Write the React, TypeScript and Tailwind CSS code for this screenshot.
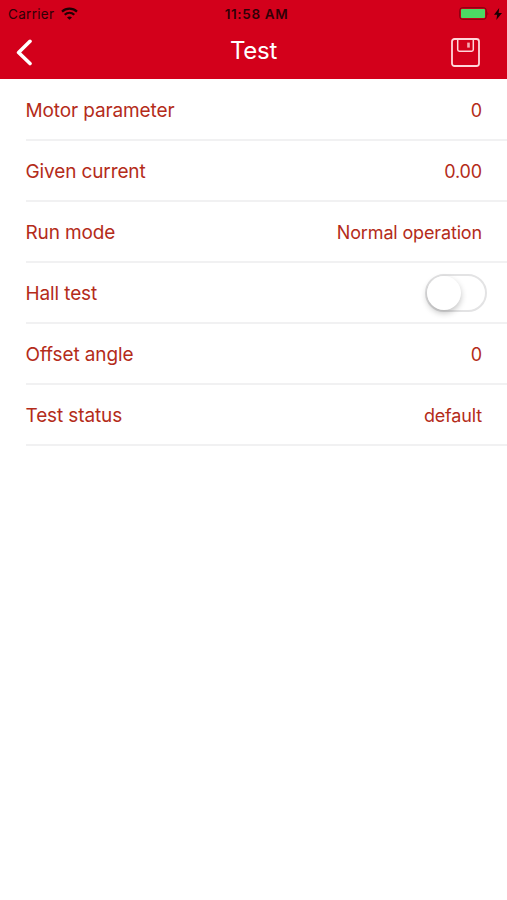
import React, { useState } from 'react'

interface RowProps {
  label: string
  children: React.ReactNode
}

const Row: React.FC<RowProps> = ({ label, children }): React.ReactElement => (
  <li className="ml-[26px] flex h-[61px] items-center justify-between border-b-2 border-[#f1f1f2] pr-[25px] text-[#b42c1a]">
    <span className="-ml-[0.5px] pt-[3px] text-[19px] tracking-[-0.12px]">{label}</span>
    {children}
  </li>
)

const Value: React.FC<{ text: string }> = ({ text }): React.ReactElement => (
  <span className="pt-px text-[18px] tracking-[-0.15px]">{text}</span>
)

const StatusBar: React.FC = (): React.ReactElement => (
  <div className="grid h-[27px] grid-cols-3 items-center pl-2 pr-[5px] text-[13.5px] text-[#300006]">
    <div className="flex items-center gap-[7px]">
      <span className="pt-px tracking-[0.3px]">Carrier</span>
      <svg width="17" height="13" viewBox="0 0 17 13" fill="none" stroke="#200004" strokeWidth="2.2">
        <path d="M1 4.6C5.2.7 11.8.7 16 4.6" />
        <path d="M3.7 7.8c2.8-2.5 6.8-2.5 9.6 0" />
        <path d="M8.5 12.8 6 10.4c1.4-1.3 3.6-1.3 5 0z" fill="#200004" stroke="none" />
      </svg>
    </div>
    <span className="pl-[3px] pt-px text-center font-semibold tracking-[0.65px]">11:58 AM</span>
    <div className="flex items-center justify-end gap-[5px]">
      <svg width="30" height="13" viewBox="0 0 30 13">
        <rect x="0.75" y="0.75" width="26.5" height="11.5" rx="2.5" fill="none" stroke="#7c0010" />
        <rect x="2" y="2" width="24" height="9" rx="1" fill="#4cd964" />
        <path d="M28.5 4.5q1.4 2 0 4z" fill="#7c0010" />
      </svg>
      <svg width="8" height="12" viewBox="0 0 8 12" fill="#180003">
        <path d="M5.2 0 0 6.8h3.2L2.3 12 8 4.9H4.6z" />
      </svg>
    </div>
  </div>
)

const App: React.FC = (): React.ReactElement => {
  const [hallTest, setHallTest] = useState<boolean>(false)

  return (
    <div className="min-h-screen bg-white font-['Inter',sans-serif]">
      <header className="h-[79px] bg-[#d3001b]">
        <StatusBar />
        <div className="grid h-[52px] grid-cols-3 items-start pl-4 pr-[27px] text-white">
          <button type="button" aria-label="Back" className="mt-3 justify-self-start">
            <svg width="17" height="27" viewBox="0 0 17 27" fill="none" stroke="currentColor" strokeWidth="3.6" strokeLinecap="round" strokeLinejoin="round">
              <path d="M14 2.3 2.6 13.5 14 24.5" />
            </svg>
          </button>
          <h1 className="mt-[6px] pl-[11px] text-center text-[24px] tracking-[-0.3px]">Test</h1>
          <button type="button" aria-label="Save" className="mt-[11px] justify-self-end">
            <svg width="29" height="29" viewBox="0 0 29 29" fill="none" stroke="#ffd6da" strokeWidth="1.8" strokeLinejoin="round">
              <rect x="1" y="1" width="27" height="27" rx="2.5" />
              <path d="M6.7 1v10.6q0 1.6 1.6 1.6h12.4q1.6 0 1.6-1.6V1" strokeWidth="1.5" />
              <path d="M17.5 4.6v5" strokeWidth="2.6" strokeOpacity="0.8" />
            </svg>
          </button>
        </div>
      </header>

      <ul className="pt-px">
        <Row label="Motor parameter">
          <Value text="0" />
        </Row>
        <Row label="Given current">
          <Value text="0.00" />
        </Row>
        <Row label="Run mode">
          <Value text="Normal operation" />
        </Row>
        <Row label="Hall test">
          <button
            type="button"
            role="switch"
            aria-checked={hallTest}
            aria-label="Hall test"
            onClick={() => setHallTest(!hallTest)}
            className={`-mr-[5px] flex h-[38px] w-[62px] items-center rounded-full border-2 border-[#e3e3e4] ${
              hallTest ? 'justify-end bg-[#4cd964]' : 'bg-white'
            }`}
          >
            <span className="size-[34px] rounded-full bg-white shadow-[0_3px_6px_rgba(0,0,0,0.24)]" />
          </button>
        </Row>
        <Row label="Offset angle">
          <Value text="0" />
        </Row>
        <Row label="Test status">
          <Value text="default" />
        </Row>
      </ul>
    </div>
  )
}

export default App
